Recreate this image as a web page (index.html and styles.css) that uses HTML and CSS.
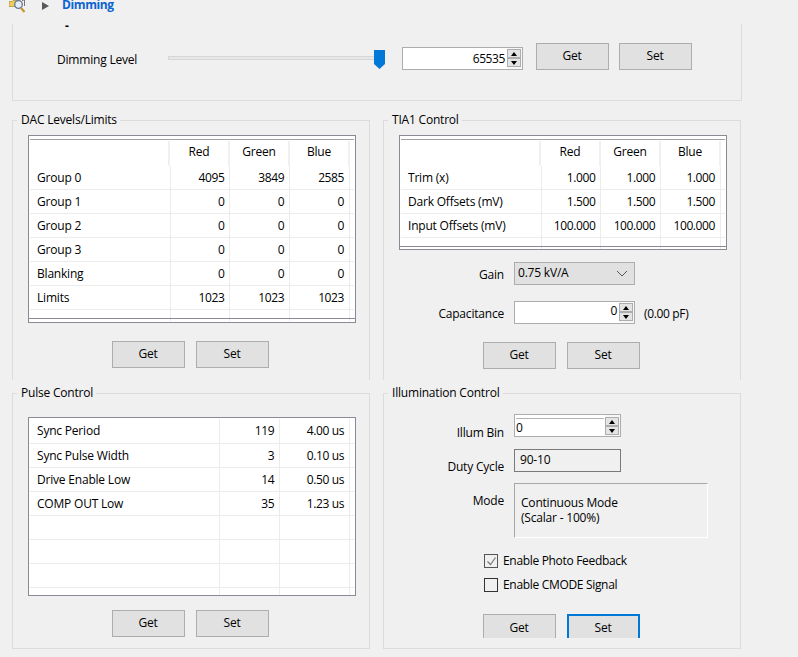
FILE: index.html
```html
<!DOCTYPE html>
<html lang="en">
<head>
<meta charset="utf-8">
<title>Dimming</title>
<link rel="stylesheet" href="styles.css">
</head>
<body>
<div class="page">
  <header class="topbar">
    <svg class="tree-icon" width="17" height="13" viewBox="0 0 17 13"><path d="M0 1.500h3l1-1h5v6H0z" fill="#f0cc5c" stroke="#a98a2c" stroke-width=".7"/><path d="M13.500 1v-1h2v6" fill="none" stroke="#555" stroke-width=".8"/><circle cx="9.500" cy="4.500" r="3.800" fill="#e3eef8" stroke="#64768c" stroke-width="1.300"/><path d="M12 8l3.500 4" stroke="#c49a2e" stroke-width="2.200"/></svg>
    <svg class="tree-arrow" width="7" height="8" viewBox="0 0 7 8"><path d="M0 0l7 4-7 4z" fill="#595959"/></svg>
    <span class="topbar-title">Dimming</span>
  </header>

  <section class="group group-dim">
    <div class="dash">-</div>
    <div class="dim-row">
      <span class="dim-label">Dimming Level</span>
      <div class="slider"><div class="track"></div><svg class="thumb" width="11" height="19" viewBox="0 0 11 19"><path d="M0 0h11v14l-5.500 5L0 14z" fill="#0078d7"/></svg></div>
      <div class="spin spin-wide">
        <span class="spin-val">65535</span>
        <span class="spin-btns"><span class="sb"><i class="up"></i></span><span class="sb"><i class="down"></i></span></span>
      </div>
      <div class="btns btns-dim"><button class="btn">Get</button><button class="btn">Set</button></div>
    </div>
  </section>

  <main class="grid">
    <section class="group group-upper">
      <div class="legend">DAC Levels/Limits</div>
      <div class="tbl tbl-dac">
        <div class="head">
          <span class="hc first"></span><span class="hc">Red</span><span class="hc">Green</span><span class="hc">Blue</span>
        </div>
        <div class="row"><span class="c first">Group 0</span><span class="c">4095</span><span class="c">3849</span><span class="c">2585</span><span class="c last"></span></div>
        <div class="row"><span class="c first">Group 1</span><span class="c">0</span><span class="c">0</span><span class="c">0</span><span class="c last"></span></div>
        <div class="row"><span class="c first">Group 2</span><span class="c">0</span><span class="c">0</span><span class="c">0</span><span class="c last"></span></div>
        <div class="row"><span class="c first">Group 3</span><span class="c">0</span><span class="c">0</span><span class="c">0</span><span class="c last"></span></div>
        <div class="row"><span class="c first">Blanking</span><span class="c">0</span><span class="c">0</span><span class="c">0</span><span class="c last"></span></div>
        <div class="row"><span class="c first">Limits</span><span class="c">1023</span><span class="c">1023</span><span class="c">1023</span><span class="c last"></span></div>
        <div class="row tail"><span class="c first"></span><span class="c"></span><span class="c"></span><span class="c"></span><span class="c last"></span></div>
      </div>
      <div class="btns btns-group"><button class="btn">Get</button><button class="btn">Set</button></div>
    </section>

    <section class="group group-upper">
      <div class="legend">TIA1 Control</div>
      <div class="tbl tbl-tia">
        <div class="head">
          <span class="hc first"></span><span class="hc">Red</span><span class="hc">Green</span><span class="hc">Blue</span>
        </div>
        <div class="row"><span class="c first">Trim (x)</span><span class="c">1.000</span><span class="c">1.000</span><span class="c">1.000</span><span class="c last"></span></div>
        <div class="row"><span class="c first">Dark Offsets (mV)</span><span class="c">1.500</span><span class="c">1.500</span><span class="c">1.500</span><span class="c last"></span></div>
        <div class="row"><span class="c first">Input Offsets (mV)</span><span class="c">100.000</span><span class="c">100.000</span><span class="c">100.000</span><span class="c last"></span></div>
        <div class="row tail"><span class="c first"></span><span class="c"></span><span class="c"></span><span class="c"></span><span class="c last"></span></div>
      </div>
      <div class="field field-gain">
        <label class="flabel">Gain</label>
        <div class="select"><span>0.75 kV/A</span><svg width="12" height="7" viewBox="0 0 12 7"><path d="M1 1l5 5 5-5" fill="none" stroke="#555" stroke-width="1"/></svg></div>
      </div>
      <div class="field field-cap">
        <label class="flabel">Capacitance</label>
        <div class="spin spin-cap">
          <span class="spin-val">0</span>
          <span class="spin-btns"><span class="sb"><i class="up"></i></span><span class="sb"><i class="down"></i></span></span>
        </div>
        <span class="unit">(0.00 pF)</span>
      </div>
      <div class="btns btns-tia"><button class="btn">Get</button><button class="btn">Set</button></div>
    </section>

    <section class="group group-lower">
      <div class="legend">Pulse Control</div>
      <div class="tbl tbl-pulse">
        <div class="row"><span class="c first">Sync Period</span><span class="c">119</span><span class="c wide">4.00 us</span><span class="c last"></span></div>
        <div class="row"><span class="c first">Sync Pulse Width</span><span class="c">3</span><span class="c wide">0.10 us</span><span class="c last"></span></div>
        <div class="row"><span class="c first">Drive Enable Low</span><span class="c">14</span><span class="c wide">0.50 us</span><span class="c last"></span></div>
        <div class="row"><span class="c first">COMP OUT Low</span><span class="c">35</span><span class="c wide">1.23 us</span><span class="c last"></span></div>
        <div class="row"><span class="c first"></span><span class="c"></span><span class="c wide"></span><span class="c last"></span></div>
        <div class="row"><span class="c first"></span><span class="c"></span><span class="c wide"></span><span class="c last"></span></div>
        <div class="row"><span class="c first"></span><span class="c"></span><span class="c wide"></span><span class="c last"></span></div>
        <div class="row tail"><span class="c first"></span><span class="c"></span><span class="c wide"></span><span class="c last"></span></div>
      </div>
      <div class="btns btns-pulse"><button class="btn">Get</button><button class="btn">Set</button></div>
    </section>

    <section class="group group-lower">
      <div class="legend">Illumination Control</div>
      <div class="field field-bin">
        <label class="flabel flabel-top">Illum Bin</label>
        <div class="spin spin-bin">
          <span class="spin-val">0</span>
          <span class="spin-btns"><span class="sb"><i class="up"></i></span><span class="sb"><i class="down"></i></span></span>
        </div>
      </div>
      <div class="field field-duty">
        <label class="flabel flabel-top2">Duty Cycle</label>
        <div class="readout">90-10</div>
      </div>
      <div class="field field-mode">
        <label class="flabel flabel-top2">Mode</label>
        <div class="modebox"><div class="modeline">Continuous Mode</div><div class="modeline">(Scalar - 100%)</div></div>
      </div>
      <div class="check check-first"><span class="box box-on"><svg width="11" height="11" viewBox="0 0 11 11"><path d="M1.500 5.500l3 3 5-7" fill="none" stroke="#7a7a7a" stroke-width="1.200"/></svg></span>Enable Photo Feedback</div>
      <div class="check"><span class="box"></span>Enable CMODE Signal</div>
      <div class="clip"><div class="btns"><button class="btn">Get</button><button class="btn btn-focus">Set</button></div></div>
    </section>
  </main>
</div>
</body>
</html>
```
FILE: styles.css
```css
* { box-sizing: border-box; }
html, body { margin: 0; padding: 0; }
body {
  background: #f0f0f0;
  color: #000;
  font: 12px/16px "Open Sans", "Noto Sans", sans-serif;
  letter-spacing: -0.2px;
  width: 798px;
  height: 657px;
  overflow: hidden;
}
.page { width: 798px; height: 657px; overflow: hidden; }

.topbar { height: 24px; display: flex; align-items: flex-start; }
.tree-icon { margin: 0 0 0 9px; }
.tree-arrow { margin: 2px 0 0 16px; }
.topbar-title { margin: 0 0 0 13px; line-height: 10px; color: #0a64d2; font-weight: 700; letter-spacing: -0.4px; }

.group { border: 1px solid #dcdcdc; background: #f0f0f0; }
.group-dim { margin-left: 12px; width: 730px; height: 77px; border-top: 0; }
.dash { height: 18px; margin-left: 52px; line-height: 4px; font-weight: 700; }
.dim-row { display: flex; align-items: flex-start; margin-top: 1px; }
.dim-label { width: 111px; margin: 9px 0 0 44px; }
.slider { position: relative; width: 217px; height: 27px; }
.track { margin-top: 13px; width: 210px; height: 4px; background: #e7e7e7; border: 1px solid #d6d6d6; }
.thumb { position: absolute; right: 0; top: 7px; }
.spin-wide { margin: 4px 0 0 17px; }
.btns-dim { margin-left: 13px; gap: 10px !important; }

.grid { display: grid; grid-template-columns: 358px 358px; column-gap: 13px; row-gap: 13px; margin: 19px 0 0 12px; }
.group-upper { height: 260px; border-bottom: 0; }
.group-lower { height: 256px; }
.legend { width: fit-content; height: 16px; margin: -9px 0 0 4px; padding: 0 3px 0 4px; background: #f0f0f0; }

.tbl { margin: 7px 0 0 15px; width: 328px; border: 1px solid #8a8a94; background: #fff; overflow: hidden; }
.tbl-dac { height: 188px; }
.tbl-tia { height: 115px; }
.tbl-pulse { height: 179px; margin-top: 16px; padding-top: 1px; }
.head { display: flex; margin: 3px 1px 0; border-top: 1px solid #a0a0a0; padding-top: 1px; height: 27px; }
.hc { width: 60px; height: 25px; line-height: 22px; text-align: center; border-right: 2px solid #f0f0f0; }
.hc.first { width: 140px; }
.row { display: flex; height: 24px; margin: 0 1px; border-bottom: 1px solid #ececec; }
.tbl-pulse .row:first-child { height: 25px; }
.tbl-pulse .row:first-child .c { line-height: 24px; }
.c { width: 60px; line-height: 23px; text-align: right; padding-right: 5px; border-right: 1px solid #ececec; letter-spacing: -0.4px; }
.c.first { width: 141px; text-align: left; padding-left: 7px; letter-spacing: -0.2px; }
.c.last { width: 4px; padding: 0; border: 0; }
.tbl-pulse .c.first { width: 191px; }
.tbl-pulse .c.wide { width: 70px; }
.tbl-dac .row.tail, .tbl-tia .row.tail { height: 11px; position: relative; }
.row.tail { border: 0; }
.tbl-dac .row.tail::after, .tbl-tia .row.tail::after {
  content: ""; position: absolute; left: -1px; right: -1px; top: 8px; height: 1px; background: #8a8a94;
}

.btns { display: flex; gap: 11px; }
.btn {
  width: 73px; height: 27px; padding: 0 1px 2px 0; margin: 0;
  font: inherit; letter-spacing: inherit; color: #000;
  background: #e1e1e1; border: 1px solid #adadad; border-radius: 0;
}
.btn-focus { border: 2px solid #0078d7; }
.btns-group { margin: 18px 0 0 99px; }
.btns-tia { margin: 18px 0 0 99px; }
.btns-pulse { margin: 14px 0 0 99px; }

.field { display: flex; align-items: flex-start; height: 23px; }
.flabel { width: 120px; margin-right: 10px; text-align: right; }
.field-gain { margin-top: 12px; }
.field-gain .flabel { padding-top: 5px; }
.field-cap { margin-top: 16px; }
.field-cap .flabel { padding-top: 5px; }
.select {
  width: 121px; height: 23px; display: flex; align-items: center; justify-content: space-between;
  background: #e1e1e1; border: 1px solid #adadad; padding: 0 6px 0 3px;
}
.select span { margin-top: -1px; }
.unit { margin: 5px 0 0 9px; letter-spacing: -0.35px; }

.spin { display: flex; justify-content: flex-end; width: 121px; height: 23px; background: #fff; border: 1px solid #adadad; }
.spin-val { flex: 1; text-align: right; padding-right: 2px; line-height: 21px; letter-spacing: -0.4px; }
.spin-cap .spin-val { line-height: 18px; padding-right: 2px; }
.spin-btns { width: 15px; padding: 1px 1px 1px 0; display: flex; flex-direction: column; background: #f7f7f7; }
.sb { width: 14px; height: 9px; background: #e4e4e4; border: 1px solid #adadad; display: flex; align-items: center; justify-content: center; }
.sb i { display: block; width: 0; height: 0; border-left: 3.500px solid transparent; border-right: 3.500px solid transparent; }
.sb .up { border-bottom: 4px solid #000; }
.sb .down { border-top: 4px solid #000; }

.field-bin { margin-top: 13px; }
.flabel-top { padding-top: 11px; }
.flabel-top2 { padding-top: 10px; }
.spin-bin { width: 107px; }
.spin-bin .spin-btns { padding-top: 2px; }
.spin-bin .spin-val { text-align: left; padding: 6px 0 0 1px; line-height: 14px; background: #fff; position: relative; margin-right: 1px; }
.spin-bin .spin-val::before { content: ""; position: absolute; left: 1px; right: 0; top: 3px; height: 1px; background: #b4b4b4; }
.field-duty { margin-top: 12px; }
.readout { width: 107px; height: 23px; border: 1px solid #7a7a7a; padding-left: 5px; line-height: 19px; }
.field-mode { margin-top: 11px; height: 55px; }
.modebox {
  width: 194px; height: 55px; padding: 12px 0 0 6px;
  border: 1px solid #a8a8a8; border-right-color: #fff; border-bottom-color: #fff;
}
.modeline { height: 15px; line-height: 14px; }
.check { display: flex; align-items: center; height: 14px; margin: 10px 0 0 100px; letter-spacing: -0.32px; }
.check-first { margin-top: 16px; }
.box { width: 14px; height: 14px; margin-right: 5px; border: 1px solid #333; display: flex; align-items: center; justify-content: center; }
.box-on { border-color: #555; }
.clip { height: 24px; margin: 22px 0 0 99px; overflow: hidden; }
.clip .btn { padding-bottom: 0; }
```
